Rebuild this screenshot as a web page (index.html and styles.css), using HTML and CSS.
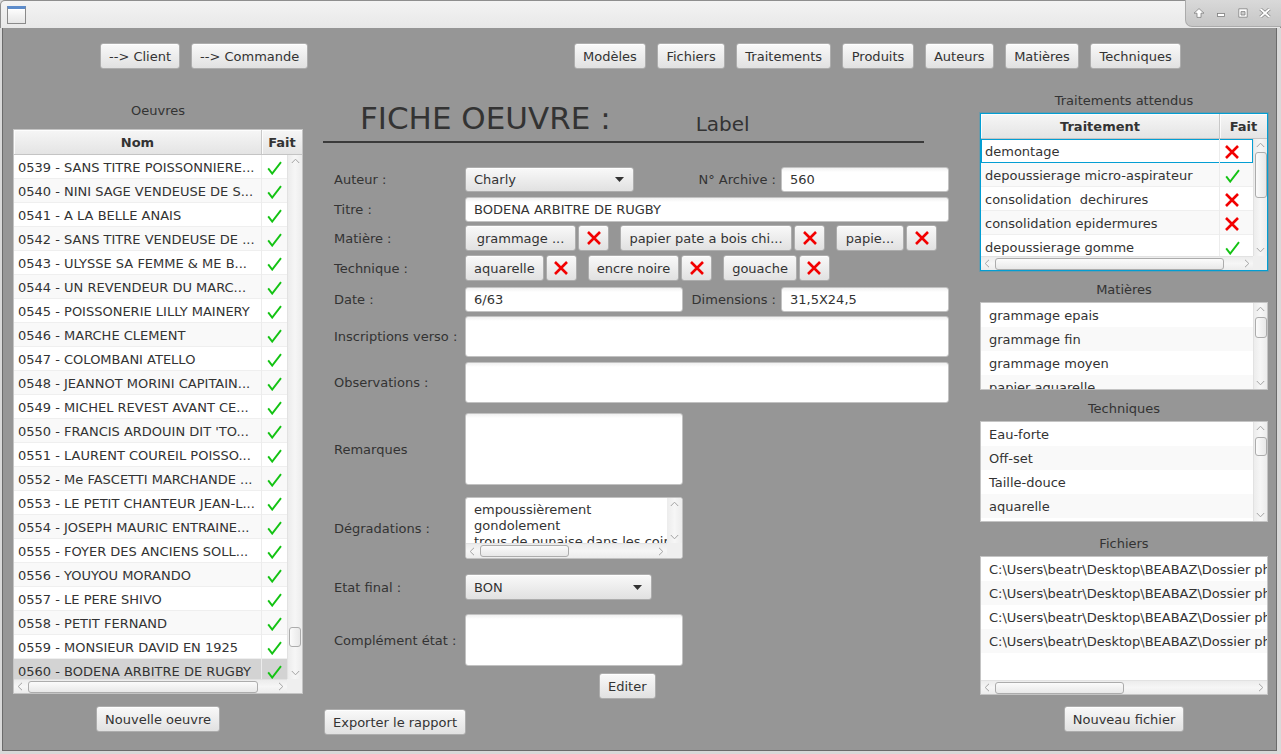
FILE: index.html
```html
<!DOCTYPE html>
<html lang="fr">
<head>
<meta charset="utf-8">
<title>Fiche oeuvre</title>
<link rel="stylesheet" href="styles.css">
</head>
<body>
<svg class="defs" width="0" height="0" aria-hidden="true">
  <symbol id="i-check" viewBox="0 0 15 14"><path d="M1.2 7.4 L5.2 12.6 L14 1.2" fill="none" stroke="#14c314" stroke-width="1.9"/></symbol>
  <symbol id="i-cross" viewBox="0 0 14 14"><path d="M1 1 L13 13 M13 1 L1 13" fill="none" stroke="#f20000" stroke-width="2.6"/></symbol>
  <symbol id="i-up" viewBox="0 0 9 6"><path d="M0.8 5 L4.5 1.2 L8.2 5" fill="none" stroke="#a3a3a3" stroke-width="1"/></symbol>
  <symbol id="i-down" viewBox="0 0 9 6"><path d="M0.8 1 L4.5 4.8 L8.2 1" fill="none" stroke="#a3a3a3" stroke-width="1"/></symbol>
  <symbol id="i-left" viewBox="0 0 6 9"><path d="M5 0.8 L1.2 4.5 L5 8.2" fill="none" stroke="#a3a3a3" stroke-width="1"/></symbol>
  <symbol id="i-right" viewBox="0 0 6 9"><path d="M1 0.8 L4.8 4.5 L1 8.2" fill="none" stroke="#a3a3a3" stroke-width="1"/></symbol>
  <symbol id="i-tri" viewBox="0 0 9 5"><path d="M0 0 H9 L4.5 5 Z" fill="#333"/></symbol>
</svg>

<div class="window">
  <div class="titlebar">
    <span class="app-icon"></span>
    <div class="wm">
      <svg class="wm-ico" width="12" height="10" viewBox="0 0 12 10"><path d="M6 0.6 L11 5.2 H8 V9.4 H4 V5.2 H1 Z" fill="#fff" stroke="#7d7d7d" stroke-width="0.8"/></svg>
      <svg class="wm-ico" width="12" height="10" viewBox="0 0 12 10"><rect x="2.5" y="5.5" width="7" height="3" fill="#fff" stroke="#7d7d7d" stroke-width="0.8"/></svg>
      <svg class="wm-ico" width="12" height="10" viewBox="0 0 12 10"><path d="M1.8 0.8 H10.2 V9.2 H1.8 Z M4 3.6 V7 H8 V3.6 Z" fill="#fff" fill-rule="evenodd" stroke="#7d7d7d" stroke-width="0.8"/></svg>
      <svg class="wm-ico" width="12" height="10" viewBox="0 0 12 10"><path d="M1.5 1 L10.5 9 M10.5 1 L1.5 9" stroke="#7d7d7d" stroke-width="3.2"/><path d="M1.5 1 L10.5 9 M10.5 1 L1.5 9" stroke="#fff" stroke-width="1.8"/></svg>
    </div>
  </div>

  <div class="content">
    <div class="toolbar">
      <div class="tgroup">
        <button class="btn">--&gt; Client</button>
        <button class="btn">--&gt; Commande</button>
      </div>
      <div class="tgroup tgroup-right">
        <button class="btn">Modèles</button>
        <button class="btn">Fichiers</button>
        <button class="btn">Traitements</button>
        <button class="btn">Produits</button>
        <button class="btn">Auteurs</button>
        <button class="btn">Matières</button>
        <button class="btn">Techniques</button>
      </div>
    </div>

    <div class="main">
      <!-- LEFT -->
      <section class="col-left">
        <div class="ptitle pt-oeuvres">Oeuvres</div>
        <div class="table table-oeuvres">
          <div class="thead">
            <div class="th th-nom">Nom</div>
            <div class="th th-fait">Fait</div>
          </div>
          <div class="tbody">
            <div class="trow"><div class="td td-nom">0539 - SANS TITRE POISSONNIERE...</div><div class="td td-fait"><svg class="ico-check"><use href="#i-check"/></svg></div></div>
            <div class="trow"><div class="td td-nom">0540 - NINI SAGE VENDEUSE DE S...</div><div class="td td-fait"><svg class="ico-check"><use href="#i-check"/></svg></div></div>
            <div class="trow"><div class="td td-nom">0541 - A LA BELLE ANAIS</div><div class="td td-fait"><svg class="ico-check"><use href="#i-check"/></svg></div></div>
            <div class="trow"><div class="td td-nom">0542 - SANS TITRE VENDEUSE DE ...</div><div class="td td-fait"><svg class="ico-check"><use href="#i-check"/></svg></div></div>
            <div class="trow"><div class="td td-nom">0543 - ULYSSE SA FEMME &amp; ME B...</div><div class="td td-fait"><svg class="ico-check"><use href="#i-check"/></svg></div></div>
            <div class="trow"><div class="td td-nom">0544 - UN REVENDEUR DU MARC...</div><div class="td td-fait"><svg class="ico-check"><use href="#i-check"/></svg></div></div>
            <div class="trow"><div class="td td-nom">0545 - POISSONERIE LILLY MAINERY</div><div class="td td-fait"><svg class="ico-check"><use href="#i-check"/></svg></div></div>
            <div class="trow"><div class="td td-nom">0546 - MARCHE CLEMENT</div><div class="td td-fait"><svg class="ico-check"><use href="#i-check"/></svg></div></div>
            <div class="trow"><div class="td td-nom">0547 - COLOMBANI ATELLO</div><div class="td td-fait"><svg class="ico-check"><use href="#i-check"/></svg></div></div>
            <div class="trow"><div class="td td-nom">0548 - JEANNOT MORINI CAPITAIN...</div><div class="td td-fait"><svg class="ico-check"><use href="#i-check"/></svg></div></div>
            <div class="trow"><div class="td td-nom">0549 - MICHEL REVEST AVANT CE...</div><div class="td td-fait"><svg class="ico-check"><use href="#i-check"/></svg></div></div>
            <div class="trow"><div class="td td-nom">0550 - FRANCIS ARDOUIN DIT 'TO...</div><div class="td td-fait"><svg class="ico-check"><use href="#i-check"/></svg></div></div>
            <div class="trow"><div class="td td-nom">0551 - LAURENT COUREIL POISSO...</div><div class="td td-fait"><svg class="ico-check"><use href="#i-check"/></svg></div></div>
            <div class="trow"><div class="td td-nom">0552 - Me FASCETTI MARCHANDE ...</div><div class="td td-fait"><svg class="ico-check"><use href="#i-check"/></svg></div></div>
            <div class="trow"><div class="td td-nom">0553 - LE PETIT CHANTEUR JEAN-L...</div><div class="td td-fait"><svg class="ico-check"><use href="#i-check"/></svg></div></div>
            <div class="trow"><div class="td td-nom">0554 - JOSEPH MAURIC ENTRAINE...</div><div class="td td-fait"><svg class="ico-check"><use href="#i-check"/></svg></div></div>
            <div class="trow"><div class="td td-nom">0555 - FOYER DES ANCIENS SOLL...</div><div class="td td-fait"><svg class="ico-check"><use href="#i-check"/></svg></div></div>
            <div class="trow"><div class="td td-nom">0556 - YOUYOU MORANDO</div><div class="td td-fait"><svg class="ico-check"><use href="#i-check"/></svg></div></div>
            <div class="trow"><div class="td td-nom">0557 - LE PERE SHIVO</div><div class="td td-fait"><svg class="ico-check"><use href="#i-check"/></svg></div></div>
            <div class="trow"><div class="td td-nom">0558 - PETIT FERNAND</div><div class="td td-fait"><svg class="ico-check"><use href="#i-check"/></svg></div></div>
            <div class="trow"><div class="td td-nom">0559 - MONSIEUR DAVID EN 1925</div><div class="td td-fait"><svg class="ico-check"><use href="#i-check"/></svg></div></div>
            <div class="trow selected"><div class="td td-nom">0560 - BODENA ARBITRE DE RUGBY</div><div class="td td-fait"><svg class="ico-check"><use href="#i-check"/></svg></div></div>
          </div>
          <div class="vscroll">
            <div class="sb-btn"><svg class="chev-v"><use href="#i-up"/></svg></div>
            <div class="sb-track"><div class="thumb-v" style="margin-top:460px;height:20px"></div></div>
            <div class="sb-btn"><svg class="chev-v"><use href="#i-down"/></svg></div>
          </div>
          <div class="hscroll">
            <div class="sb-btn-h"><svg class="chev-h"><use href="#i-left"/></svg></div>
            <div class="sb-track-h"><div class="thumb-h" style="width:230px"></div></div>
            <div class="sb-btn-h"><svg class="chev-h"><use href="#i-right"/></svg></div>
          </div>
          <div class="corner"></div>
        </div>
        <button class="btn btn-bottom-left">Nouvelle oeuvre</button>
      </section>

      <!-- CENTER -->
      <section class="col-center">
        <div class="fiche-head">
          <h1 class="fiche-title">FICHE OEUVRE :</h1>
          <span class="fiche-label">Label</span>
        </div>

        <div class="form">
          <div class="frow r-auteur">
            <span class="flabel">Auteur :</span>
            <div class="combo combo-auteur"><span class="combo-text">Charly</span><svg class="tri"><use href="#i-tri"/></svg></div>
            <div class="pair">
              <span class="plabel">N° Archive :</span>
              <div class="field field-side">560</div>
            </div>
          </div>

          <div class="frow r-titre">
            <span class="flabel">Titre :</span>
            <div class="field field-grow">BODENA ARBITRE DE RUGBY</div>
          </div>

          <div class="frow r-matiere">
            <span class="flabel">Matière :</span>
            <div class="tags">
              <div class="tag-group"><button class="btn tag tag-gram">grammage ...</button><button class="btn tag-x"><svg class="ico-cross"><use href="#i-cross"/></svg></button></div>
              <div class="tag-group"><button class="btn tag tag-papier">papier pate a bois chi...</button><button class="btn tag-x"><svg class="ico-cross"><use href="#i-cross"/></svg></button></div>
              <div class="tag-group"><button class="btn tag tag-papie">papie...</button><button class="btn tag-x"><svg class="ico-cross"><use href="#i-cross"/></svg></button></div>
            </div>
          </div>

          <div class="frow r-technique">
            <span class="flabel">Technique :</span>
            <div class="tags">
              <div class="tag-group"><button class="btn tag">aquarelle</button><button class="btn tag-x"><svg class="ico-cross"><use href="#i-cross"/></svg></button></div>
              <div class="tag-group"><button class="btn tag">encre noire</button><button class="btn tag-x"><svg class="ico-cross"><use href="#i-cross"/></svg></button></div>
              <div class="tag-group"><button class="btn tag">gouache</button><button class="btn tag-x"><svg class="ico-cross"><use href="#i-cross"/></svg></button></div>
            </div>
          </div>

          <div class="frow r-date">
            <span class="flabel">Date :</span>
            <div class="field field-half">6/63</div>
            <div class="pair">
              <span class="plabel">Dimensions :</span>
              <div class="field field-side">31,5X24,5</div>
            </div>
          </div>

          <div class="frow r-inscr">
            <span class="flabel">Inscriptions verso :</span>
            <div class="field field-grow field-tall"></div>
          </div>

          <div class="frow r-obs">
            <span class="flabel">Observations :</span>
            <div class="field field-grow field-tall"></div>
          </div>

          <div class="frow r-rem">
            <span class="flabel">Remarques</span>
            <div class="field field-half field-tall"></div>
          </div>

          <div class="frow r-degr">
            <span class="flabel">Dégradations :</span>
            <div class="textarea">
              <div class="ta-text">empoussièrement<br>gondolement<br>trous de punaise dans les coins</div>
              <div class="vscroll vscroll-ta">
                <div class="sb-btn"><svg class="chev-v"><use href="#i-up"/></svg></div>
                <div class="sb-track"></div>
                <div class="sb-btn"><svg class="chev-v"><use href="#i-down"/></svg></div>
              </div>
              <div class="hscroll">
                <div class="sb-btn-h"><svg class="chev-h"><use href="#i-left"/></svg></div>
                <div class="sb-track-h"><div class="thumb-h" style="width:89px"></div></div>
                <div class="sb-btn-h"><svg class="chev-h"><use href="#i-right"/></svg></div>
              </div>
              <div class="corner"></div>
            </div>
          </div>

          <div class="frow r-etat">
            <span class="flabel">Etat final :</span>
            <div class="combo combo-etat"><span class="combo-text">BON</span><svg class="tri"><use href="#i-tri"/></svg></div>
          </div>

          <div class="frow r-compl">
            <span class="flabel">Complément état :</span>
            <div class="field field-half field-tall"></div>
          </div>

          <div class="frow r-editer">
            <button class="btn">Editer</button>
          </div>

          <div class="frow r-export">
            <button class="btn">Exporter le rapport</button>
          </div>
        </div>
      </section>

      <!-- RIGHT -->
      <section class="col-right">
        <div class="ptitle pt-trait">Traitements attendus</div>
        <div class="table table-trait">
          <div class="thead">
            <div class="th th-trait">Traitement</div>
            <div class="th th-fait">Fait</div>
          </div>
          <div class="tbody">
            <div class="trow focused"><div class="td td-trait">demontage</div><div class="td td-fait2"><svg class="ico-cross"><use href="#i-cross"/></svg></div></div>
            <div class="trow"><div class="td td-trait">depoussierage micro-aspirateur</div><div class="td td-fait2"><svg class="ico-check"><use href="#i-check"/></svg></div></div>
            <div class="trow"><div class="td td-trait">consolidation&nbsp; dechirures</div><div class="td td-fait2"><svg class="ico-cross"><use href="#i-cross"/></svg></div></div>
            <div class="trow"><div class="td td-trait">consolidation epidermures</div><div class="td td-fait2"><svg class="ico-cross"><use href="#i-cross"/></svg></div></div>
            <div class="trow"><div class="td td-trait">depoussierage gomme</div><div class="td td-fait2"><svg class="ico-check"><use href="#i-check"/></svg></div></div>
          </div>
          <div class="vscroll">
            <div class="sb-btn"><svg class="chev-v"><use href="#i-up"/></svg></div>
            <div class="sb-track"><div class="thumb-v" style="margin-top:1px;height:46px"></div></div>
            <div class="sb-btn"><svg class="chev-v"><use href="#i-down"/></svg></div>
          </div>
          <div class="hscroll">
            <div class="sb-btn-h"><svg class="chev-h"><use href="#i-left"/></svg></div>
            <div class="sb-track-h"><div class="thumb-h" style="width:229px"></div></div>
            <div class="sb-btn-h"><svg class="chev-h"><use href="#i-right"/></svg></div>
          </div>
          <div class="corner"></div>
        </div>

        <div class="ptitle pt-list">Matières</div>
        <div class="listview list-mat">
          <div class="lv-items">
            <div class="lv-cell">grammage epais</div>
            <div class="lv-cell">grammage fin</div>
            <div class="lv-cell">grammage moyen</div>
            <div class="lv-cell">papier aquarelle</div>
          </div>
          <div class="vscroll">
            <div class="sb-btn"><svg class="chev-v"><use href="#i-up"/></svg></div>
            <div class="sb-track"><div class="thumb-v" style="margin-top:2px;height:21px"></div></div>
            <div class="sb-btn"><svg class="chev-v"><use href="#i-down"/></svg></div>
          </div>
        </div>

        <div class="ptitle pt-list">Techniques</div>
        <div class="listview list-tech">
          <div class="lv-items">
            <div class="lv-cell">Eau-forte</div>
            <div class="lv-cell">Off-set</div>
            <div class="lv-cell">Taille-douce</div>
            <div class="lv-cell">aquarelle</div>
            <div class="lv-cell">burin</div>
          </div>
          <div class="vscroll">
            <div class="sb-btn"><svg class="chev-v"><use href="#i-up"/></svg></div>
            <div class="sb-track"><div class="thumb-v" style="margin-top:3px;height:19px"></div></div>
            <div class="sb-btn"><svg class="chev-v"><use href="#i-down"/></svg></div>
          </div>
        </div>

        <div class="ptitle pt-fich">Fichiers</div>
        <div class="listview list-fich">
          <div class="lv-items">
            <div class="lv-cell">C:\Users\beatr\Desktop\BEABAZ\Dossier photos\0560-1.jpg</div>
            <div class="lv-cell">C:\Users\beatr\Desktop\BEABAZ\Dossier photos\0560-2.jpg</div>
            <div class="lv-cell">C:\Users\beatr\Desktop\BEABAZ\Dossier photos\0560-3.jpg</div>
            <div class="lv-cell">C:\Users\beatr\Desktop\BEABAZ\Dossier photos\0560-4.jpg</div>
          </div>
          <div class="hscroll hscroll-full">
            <div class="sb-btn-h"><svg class="chev-h"><use href="#i-left"/></svg></div>
            <div class="sb-track-h"><div class="thumb-h" style="width:129px"></div></div>
            <div class="sb-btn-h"><svg class="chev-h"><use href="#i-right"/></svg></div>
          </div>
        </div>
        <button class="btn btn-bottom-right">Nouveau fichier</button>
      </section>
    </div>
  </div>
</div>
</body>
</html>
```

FILE: styles.css
```css
* { box-sizing: border-box; }
html, body { margin: 0; padding: 0; }
body {
  width: 1281px;
  height: 754px;
  overflow: hidden;
  font-family: "DejaVu Sans", "Noto Sans", sans-serif;
  font-size: 13px;
  color: #333;
  background: #d8d8d8;
}
.defs { position: absolute; width: 0; height: 0; overflow: hidden; }

.window {
  width: 1281px;
  height: 754px;
  display: flex;
  flex-direction: column;
  background: #d9d9d9;
}

/* ---------- title bar ---------- */
.titlebar {
  height: 28px;
  flex: none;
  display: flex;
  align-items: flex-start;
  background: linear-gradient(#f3f3f3, #e8e8e8);
  border: 1px solid #8e8e8e;
  border-bottom: none;
  border-radius: 5px 5px 0 0;
}
.app-icon {
  width: 19px;
  height: 18px;
  margin: 5px 0 0 6px;
  border: 1px solid #8a8a8a;
  border-top: 3px solid #5d8ccb;
  background: linear-gradient(#fdfdfd, #e6e6e6);
  box-shadow: inset 0 1px 0 #fff;
}
.wm {
  margin-left: auto;
  width: 96px;
  height: 27px;
  display: flex;
  align-items: center;
  gap: 10px;
  padding: 0 0 0 7px;
  background: linear-gradient(#d9d9d9, #c6c6c6);
  border-left: 1px solid #ababab;
  border-bottom: 1px solid #ababab;
  border-bottom-left-radius: 7px;
  margin-top: -1px;
  margin-right: -1px;
}
.wm-ico { display: block; flex: none; }

/* ---------- content ---------- */
.content {
  flex: 1;
  margin: 0 4px 3px 2px;
  border: 1px solid #6b6b6b;
  border-top: none;
  background: #969696;
  display: flex;
  flex-direction: column;
}
.toolbar {
  flex: none;
  display: flex;
  justify-content: space-between;
  padding: 15px 95px 0 97px;
  height: 41px;
}
.tgroup { display: flex; gap: 11px; }
.tgroup-right .btn { padding: 0 8.3px; }

.btn {
  height: 26px;
  padding: 0 8px;
  border: 1px solid #adadad;
  border-radius: 3px;
  background: linear-gradient(#f9f9f9, #e1e1e1);
  box-shadow: inset 0 1px 0 rgba(255,255,255,0.8);
  font-family: "DejaVu Sans", sans-serif;
  font-size: 13px;
  color: #333;
  white-space: nowrap;
  display: inline-flex;
  align-items: center;
  justify-content: center;
  flex: none;
  margin: 0;
  overflow: hidden;
}

.main {
  flex: 1;
  display: flex;
  align-items: flex-start;
  padding-left: 10px;
}

/* ---------- columns ---------- */
.col-left {
  width: 290px;
  flex: none;
  display: flex;
  flex-direction: column;
  align-items: center;
}
.col-center {
  width: 626px;
  flex: none;
  margin-left: 20px;
}
.col-right {
  width: 288px;
  flex: none;
  margin-left: 31px;
  display: flex;
  flex-direction: column;
  align-items: center;
}
.ptitle {
  height: 16px;
  line-height: 16px;
  white-space: nowrap;
  color: #333;
}
.pt-oeuvres { margin-top: 34px; }
.pt-trait { margin-top: 24px; }
.pt-list { margin-top: 11px; }
.pt-fich { margin-top: 14px; }

/* ---------- tables ---------- */
.table {
  display: grid;
  background: #fff;
  border: 1px solid #c4c4c4;
  margin-top: 4px;
  overflow: hidden;
}
.table-oeuvres {
  width: 290px;
  height: 565px;
  margin-top: 10px;
  grid-template-columns: 273px 15px;
  grid-template-rows: 25px 524px 14px;
}
.table-trait {
  width: 288px;
  height: 158px;
  border-color: #039ed3;
  box-shadow: 0 0 0 1px rgba(3,158,211,0.25);
  grid-template-columns: 272px 14px;
  grid-template-rows: 25px 117px 14px;
}
.thead {
  grid-column: 1 / 3;
  display: flex;
  background: linear-gradient(#f6f6f6, #e4e4e4);
  border-bottom: 1px solid #c4c4c4;
}
.th {
  display: flex;
  align-items: center;
  justify-content: center;
  padding-top: 1px;
  font-weight: bold;
  color: #333;
  border-right: 1px solid #c8c8c8;
  box-shadow: inset 1px 1px 0 rgba(255,255,255,0.8);
}
.th-nom { width: 248px; }
.th-trait { width: 239px; }
.th-fait { flex: 1; border-right: none; }
.tbody { overflow: hidden; }
.trow {
  display: flex;
  height: 24px;
  background: #fff;
  box-shadow: inset 0 -1px 0 #efefef;
}
.trow:nth-child(even) { background: #f9f9f9; }
.trow.selected { background: #d3d3d3; }
.trow.focused { box-shadow: inset 0 0 0 1px #039ed3; }
.td {
  display: flex;
  align-items: center;
  padding-top: 1px;
  white-space: nowrap;
  overflow: hidden;
  border-right: 1px solid #ececec;
}
.td-nom { width: 248px; padding-left: 4px; }
.td-trait { width: 239px; padding-left: 4px; }
.td-fait { width: 25px; justify-content: center; border-right: none; }
.td-fait2 { width: 33px; justify-content: flex-start; padding-left: 5px; border-right: none; }
.ico-check { width: 15px; height: 14px; display: block; }
.ico-cross { width: 14px; height: 14px; display: block; }

/* ---------- scrollbars ---------- */
.vscroll {
  display: flex;
  flex-direction: column;
  background: linear-gradient(to right, #ececec, #f6f6f6 50%, #ececec);
  border-left: 1px solid #e2e2e2;
}
.sb-btn {
  height: 12px;
  flex: none;
  display: flex;
  align-items: center;
  justify-content: center;
}
.chev-v { width: 9px; height: 6px; display: block; }
.chev-h { width: 6px; height: 9px; display: block; }
.sb-track { flex: 1; }
.thumb-v {
  width: 12px;
  margin-left: auto;
  margin-right: auto;
  border: 1px solid #acacac;
  border-radius: 3px;
  background: linear-gradient(to right, #fbfbfb, #e8e8e8);
}
.hscroll {
  display: flex;
  background: linear-gradient(#ececec, #f6f6f6 50%, #ececec);
  border-top: 1px solid #e2e2e2;
}
.sb-btn-h {
  width: 12px;
  flex: none;
  display: flex;
  align-items: center;
  justify-content: center;
}
.sb-track-h { flex: 1; display: flex; align-items: center; padding-left: 2px; }
.thumb-h {
  height: 12px;
  border: 1px solid #acacac;
  border-radius: 3px;
  background: linear-gradient(#fbfbfb, #e8e8e8);
}
.corner { background: #efefef; }

/* ---------- list views ---------- */
.listview {
  width: 288px;
  margin-top: 4px;
  border: 1px solid #c4c4c4;
  background: #fff;
  display: grid;
  overflow: hidden;
}
.list-mat { height: 88px; grid-template-columns: 272px 14px; }
.list-tech { height: 101px; grid-template-columns: 272px 14px; }
.list-fich { height: 139px; grid-template-columns: 286px; grid-template-rows: 123px 14px; }
.lv-items { overflow: hidden; }
.lv-cell {
  height: 24px;
  line-height: 24px;
  padding: 1px 0 0 8px;
  white-space: nowrap;
  overflow: hidden;
  background: #fff;
}
.lv-cell:nth-child(even) { background: #f9f9f9; }

.btn-bottom-left { margin-top: 12px; }
.btn-bottom-right { margin-top: 11px; }

/* ---------- center form ---------- */
.fiche-head {
  width: 601px;
  margin-top: 31px;
  display: flex;
  align-items: flex-end;
  padding: 0 0 5px 37px;
  border-bottom: 2px solid #3a3a3a;
}
.fiche-title {
  margin: 0;
  font-size: 31px;
  line-height: 36px;
  font-weight: normal;
  color: #333;
  white-space: nowrap;
}
.fiche-label {
  font-size: 20px;
  line-height: 24px;
  margin-left: 85px;
  color: #333;
}
.form { padding-left: 11px; }
.frow {
  display: flex;
  align-items: center;
}
.flabel {
  width: 131px;
  flex: none;
  white-space: nowrap;
}
.pair {
  margin-left: auto;
  display: flex;
  align-items: center;
  gap: 5px;
}
.plabel { white-space: nowrap; }
.field {
  height: 25px;
  background: linear-gradient(#f0f0f0, #fff 4px);
  border: 1px solid #c2c2c2;
  border-radius: 3px;
  padding: 0 8px;
  display: flex;
  align-items: center;
  white-space: nowrap;
  color: #333;
}
.field-side { width: 168px; }
.field-half { width: 218px; }
.field-grow { flex: 1; }
.field-tall { height: 100%; }

.combo {
  height: 25px;
  border: 1px solid #adadad;
  border-radius: 3px;
  background: linear-gradient(#f9f9f9, #e1e1e1);
  box-shadow: inset 0 1px 0 rgba(255,255,255,0.8);
  display: flex;
  align-items: center;
  padding: 0 9px 0 8px;
}
.combo-auteur { width: 169px; }
.combo-etat { width: 187px; height: 26px; }
.combo-text { flex: 1; }
.tri { width: 9px; height: 5px; display: block; }

.tags { display: flex; gap: 11px; }
.tag-group { display: flex; gap: 2px; }
.tag { padding: 0 8px; }
.tag-gram { width: 111px; }
.tag-papier { width: 172px; }
.tag-papie { width: 68px; }
.tag-x { width: 31px; padding: 0; }

.r-auteur { margin-top: 24px; height: 25px; }
.r-titre { margin-top: 5px; height: 25px; }
.r-matiere { margin-top: 3px; height: 26px; }
.r-technique { margin-top: 4px; height: 26px; }
.r-date { margin-top: 6px; height: 25px; }
.r-inscr { margin-top: 4px; height: 41px; }
.r-obs { margin-top: 5px; height: 41px; }
.r-rem { margin-top: 10px; height: 72px; }
.r-degr { margin-top: 12px; height: 62px; }
.r-etat { margin-top: 15px; height: 26px; }
.r-compl { margin-top: 14px; height: 52px; }
.r-editer { margin-top: 7px; height: 26px; padding-left: 265px; }
.r-export { margin-top: 10px; height: 26px; margin-left: -10px; }

.textarea {
  width: 218px;
  height: 62px;
  border: 1px solid #c2c2c2;
  border-radius: 3px;
  background: #fff;
  display: grid;
  grid-template-columns: 201px 15px;
  grid-template-rows: 45px 15px;
  overflow: hidden;
}
.ta-text {
  padding: 4px 0 0 8px;
  line-height: 16px;
  white-space: nowrap;
  overflow: hidden;
}
.vscroll-ta { border-left: none; }
```
